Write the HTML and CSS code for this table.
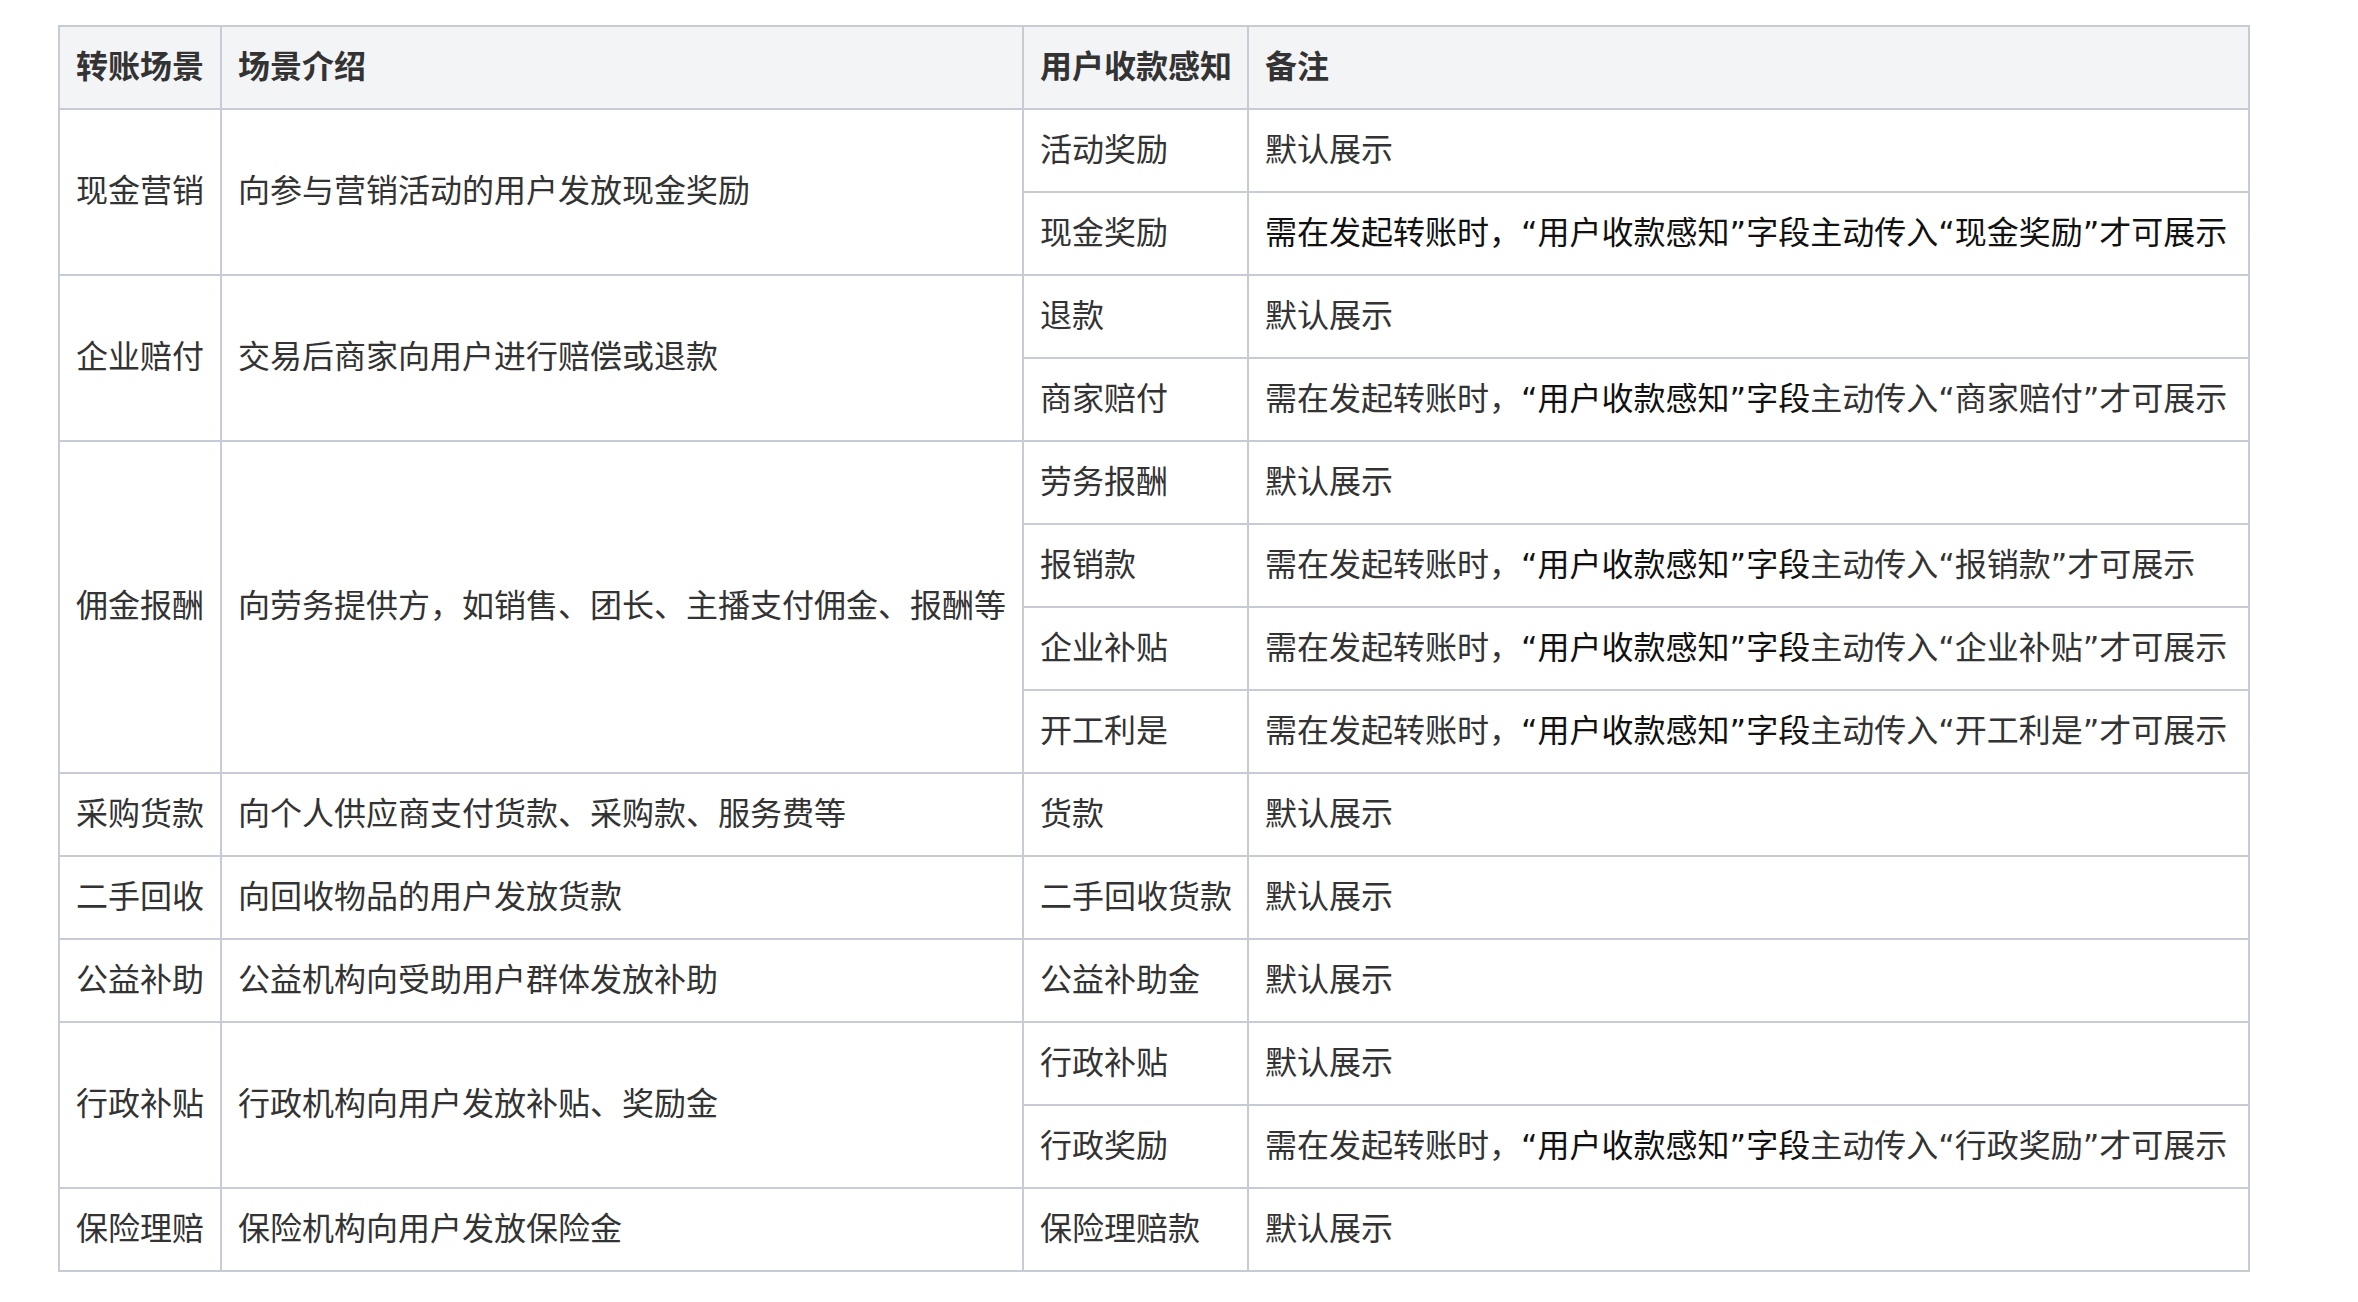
FILE: index.html
```html
<!DOCTYPE html>
<html lang="zh-CN">
<head>
<meta charset="utf-8">
<title>转账场景</title>
<link rel="stylesheet" href="styles.css">
</head>
<body>
<div class="page">
<table class="scene-table">
  <colgroup>
    <col class="c1"><col class="c2"><col class="c3"><col class="c4">
  </colgroup>
  <thead>
    <tr><th>转账场景</th><th>场景介绍</th><th>用户收款感知</th><th>备注</th></tr>
  </thead>
  <tbody>
    <tr><td rowspan="2">现金营销</td><td rowspan="2">向参与营销活动的用户发放现金奖励</td><td>活动奖励</td><td>默认展示</td></tr>
    <tr><td>现金奖励</td><td class="strong">需在发起转账时，“用户收款感知”字段主动传入“现金奖励”才可展示</td></tr>
    <tr><td rowspan="2">企业赔付</td><td rowspan="2">交易后商家向用户进行赔偿或退款</td><td>退款</td><td>默认展示</td></tr>
    <tr><td>商家赔付</td><td>需在发起转账时，<span class="em">“用户收款感知”字段</span>主动传入“商家赔付”才可展示</td></tr>
    <tr><td rowspan="4">佣金报酬</td><td rowspan="4">向劳务提供方，如销售、团长、主播支付佣金、报酬等</td><td>劳务报酬</td><td>默认展示</td></tr>
    <tr><td>报销款</td><td>需在发起转账时，<span class="em">“用户收款感知”字段</span>主动传入“报销款”才可展示</td></tr>
    <tr><td>企业补贴</td><td>需在发起转账时，<span class="em">“用户收款感知”字段</span>主动传入“企业补贴”才可展示</td></tr>
    <tr><td>开工利是</td><td>需在发起转账时，<span class="em">“用户收款感知”字段</span>主动传入“开工利是”才可展示</td></tr>
    <tr><td>采购货款</td><td>向个人供应商支付货款、采购款、服务费等</td><td>货款</td><td>默认展示</td></tr>
    <tr><td>二手回收</td><td>向回收物品的用户发放货款</td><td>二手回收货款</td><td>默认展示</td></tr>
    <tr><td>公益补助</td><td>公益机构向受助用户群体发放补助</td><td>公益补助金</td><td>默认展示</td></tr>
    <tr><td rowspan="2">行政补贴</td><td rowspan="2">行政机构向用户发放补贴、奖励金</td><td>行政补贴</td><td>默认展示</td></tr>
    <tr><td>行政奖励</td><td>需在发起转账时，<span class="em">“用户收款感知”字段</span>主动传入“行政奖励”才可展示</td></tr>
    <tr><td>保险理赔</td><td>保险机构向用户发放保险金</td><td>保险理赔款</td><td>默认展示</td></tr>
  </tbody>
</table>
</div>
</body>
</html>
```
FILE: styles.css
```css
html, body {
  margin: 0;
  padding: 0;
  background: #ffffff;
}
.page {
  padding: 25px 0 0 58px;
}
.scene-table {
  border-collapse: collapse;
  table-layout: fixed;
  width: 2190px;
  font-family: "DejaVu Sans", "Noto Sans CJK SC", sans-serif;
  font-size: 32px;
  color: #333333;
}
.c1 { width: 162px; }
.c2 { width: 802px; }
.c3 { width: 225px; }
.c4 { width: 1001px; }
.scene-table th,
.scene-table td {
  border: 2px solid #c6cbd4;
  padding: 0 16px 2px;
  height: 79px;
  text-align: left;
  vertical-align: middle;
  white-space: nowrap;
  line-height: 40px;
}
.scene-table th {
  background: #f3f4f6;
  font-weight: 700;
  color: #333333;
}
.scene-table td.strong,
.scene-table .em {
  color: #111111;
}
```
